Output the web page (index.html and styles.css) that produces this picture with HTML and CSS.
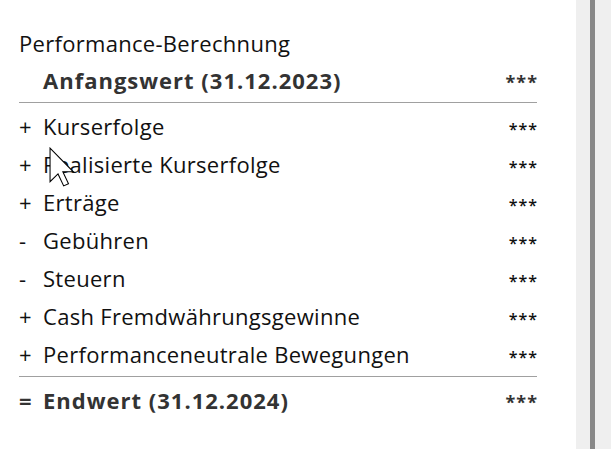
FILE: index.html
```html
<!DOCTYPE html>
<html lang="de">
<head>
<meta charset="utf-8">
<link rel="stylesheet" href="styles.css">
</head>
<body>
<div class="page">
  <main class="content">
    <div class="title">Performance-Berechnung</div>
    <div class="row bold"><span class="sign"></span><span class="label">Anfangswert (31.12.2023)</span><span class="val">***</span></div>
    <div class="list">
      <div class="row"><span class="sign">+</span><span class="label">Kurserfolge</span><span class="val">***</span></div>
      <div class="row"><span class="sign">+</span><span class="label">Realisierte Kurserfolge</span><span class="val">***</span></div>
      <div class="row"><span class="sign">+</span><span class="label">Erträge</span><span class="val">***</span></div>
      <div class="row"><span class="sign">-</span><span class="label">Gebühren</span><span class="val">***</span></div>
      <div class="row"><span class="sign">-</span><span class="label">Steuern</span><span class="val">***</span></div>
      <div class="row"><span class="sign">+</span><span class="label">Cash Fremdwährungsgewinne</span><span class="val">***</span></div>
      <div class="row"><span class="sign">+</span><span class="label">Performanceneutrale Bewegungen</span><span class="val">***</span></div>
    </div>
    <div class="row bold total"><span class="sign">=</span><span class="label">Endwert (31.12.2024)</span><span class="val">***</span></div>
  </main>
  <aside class="scrollbar"><div class="thumb"></div></aside>
</div>
<svg class="cursor" width="26" height="40" viewBox="0 0 12.4 19"><path d="M0.5 0.5 L0.5 16.5 L4.3 12.8 L7 18.5 L9.3 17.5 L6.6 11.8 L11.6 11.8 Z" fill="#fff" stroke="#000" stroke-width="0.5" stroke-linejoin="miter"/></svg>
</body>
</html>
```
FILE: styles.css
```css
html, body {
  margin: 0;
  padding: 0;
  background: #fff;
  height: 100%;
}
body {
  font-family: "Open Sans", "Noto Sans", sans-serif;
  font-size: 22px;
  color: #111;
  position: relative;
  overflow: hidden;
}
.page {
  display: flex;
  height: 449px;
}
.content {
  width: 518px;
  padding: 25px 0 0 19px;
  flex: none;
}
.title {
  font-size: 22px;
  line-height: 36px;
  height: 36px;
  letter-spacing: 0.3px;
}
.row {
  display: flex;
  align-items: baseline;
  line-height: 38px;
  height: 38px;
  letter-spacing: 0.3px;
}
.sign {
  width: 24px;
  flex: none;
  letter-spacing: 0;
}
.label { flex: 1; }
.val { font-size: 16px; font-weight: 600; letter-spacing: 1px; margin-right: -1px; }
.bold { font-weight: 700; color: #333; letter-spacing: 1px; }
.bold .val { font-size: 18px; font-weight: 700; }
.list {
  border-top: 1px solid #a0a0a0;
  border-bottom: 1px solid #a0a0a0;
  padding: 4px 0 3px;
  margin-top: 3px;
}
.total { margin-top: 4px; }
.scrollbar {
  margin-left: auto;
  width: 35px;
  background: #efefef;
  display: flex;
  padding-left: 14px;
  box-sizing: border-box;
}
.thumb {
  width: 5px;
  background: #888;
}
.cursor {
  position: absolute;
  left: 49px;
  top: 147px;
}
```
